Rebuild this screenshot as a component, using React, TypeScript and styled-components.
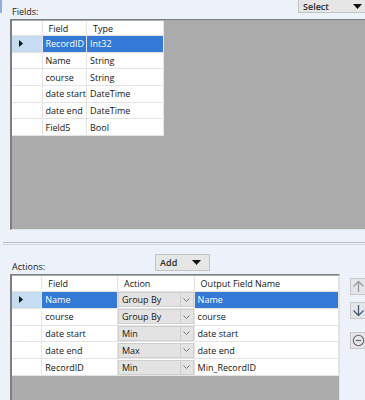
import styled, { createGlobalStyle } from "styled-components";

const GlobalStyle = createGlobalStyle`
  html, body {
    margin: 0;
    padding: 0;
    background: #edf1f9;
  }
  body {
    font-family: "Open Sans", "Noto Sans", sans-serif;
    font-size: 9px;
    color: #151515;
  }
`;

type FieldRow = { field: string; type: string };
type ActionRow = { field: string; action: string; output: string };

const fields: FieldRow[] = [
  { field: "RecordID", type: "Int32" },
  { field: "Name", type: "String" },
  { field: "course", type: "String" },
  { field: "date start", type: "DateTime" },
  { field: "date end", type: "DateTime" },
  { field: "Field5", type: "Bool" },
];

const actions: ActionRow[] = [
  { field: "Name", action: "Group By", output: "Name" },
  { field: "course", action: "Group By", output: "course" },
  { field: "date start", action: "Min", output: "date start" },
  { field: "date end", action: "Max", output: "date end" },
  { field: "RecordID", action: "Min", output: "Min_RecordID" },
];

const Caret = () => (
  <svg width="9" height="5" viewBox="0 0 9 5">
    <path d="M0 0 H9 L4.5 5 Z" fill="#111" />
  </svg>
);

const Chevron = () => (
  <svg width="7" height="4" viewBox="0 0 7 4">
    <path d="M0.5 0.5 L3.5 3.5 L6.5 0.5" fill="none" stroke="#7a7a7a" strokeWidth="1" />
  </svg>
);

const RowPointer = () => (
  <svg width="4" height="7" viewBox="0 0 4 7">
    <path d="M0 0 L4 3.5 L0 7 Z" fill="#111" />
  </svg>
);

const App = () => {
  return (
    <>
      <GlobalStyle />
      <Page>
        <EdgeMark />
        <SectionHead $height={19}>
          <Label>Fields:</Label>
          <DropButton $width={67} $top>
            <span>Select</span>
            <Caret />
          </DropButton>
        </SectionHead>

        <GridFrame $height={211}>
          <Table>
            <colgroup>
              <col style={{ width: 30 }} />
              <col style={{ width: 43 }} />
              <col style={{ width: 77 }} />
            </colgroup>
            <thead>
              <tr>
                <HeadCell />
                <HeadCell>Field</HeadCell>
                <HeadCell>Type</HeadCell>
              </tr>
            </thead>
            <tbody>
              {fields.map((f, i) => (
                <BodyRow key={f.field} $height={16.67}>
                  <RowHead $selected={i === 0}>{i === 0 && <RowPointer />}</RowHead>
                  <Cell $selected={i === 0}>{f.field}</Cell>
                  <Cell $selected={i === 0}>{f.type}</Cell>
                </BodyRow>
              ))}
            </tbody>
          </Table>
        </GridFrame>

        <Divider />

        <SectionHead $height={29}>
          <Label>Actions:</Label>
          <DropButton $width={55} $offset={110}>
            <span>Add</span>
            <Caret />
          </DropButton>
        </SectionHead>

        <ActionsBody>
          <GridFrame $width={330} $height={130}>
            <Table>
              <colgroup>
                <col style={{ width: 30 }} />
                <col style={{ width: 76 }} />
                <col style={{ width: 77 }} />
                <col style={{ width: 145 }} />
              </colgroup>
              <thead>
                <tr>
                  <HeadCell $height={15} />
                  <HeadCell>Field</HeadCell>
                  <HeadCell>Action</HeadCell>
                  <HeadCell>Output Field Name</HeadCell>
                </tr>
              </thead>
              <tbody>
                {actions.map((a, i) => (
                  <BodyRow key={a.field} $height={16.8}>
                    <RowHead $selected={i === 0}>{i === 0 && <RowPointer />}</RowHead>
                    <Cell $selected={i === 0}>{a.field}</Cell>
                    <ComboCell>
                      <ComboInner>
                        <span>{a.action}</span>
                        <ComboArrow>
                          <Chevron />
                        </ComboArrow>
                      </ComboInner>
                    </ComboCell>
                    <Cell $selected={i === 0}>{a.output}</Cell>
                  </BodyRow>
                ))}
              </tbody>
            </Table>
          </GridFrame>

          <SideButtons>
            <IconButton>
              <svg width="13" height="13" viewBox="0 0 13 13">
                <path d="M6.5 12 V1.5 M1.5 6.5 L6.5 1.5 L11.5 6.5" fill="none" stroke="#9a9a9a" strokeWidth="1.3" />
              </svg>
            </IconButton>
            <IconButton>
              <svg width="13" height="13" viewBox="0 0 13 13">
                <path d="M6.5 1 V11.5 M1.5 6.5 L6.5 11.5 L11.5 6.5" fill="none" stroke="#4a5a78" strokeWidth="1.3" />
              </svg>
            </IconButton>
            <IconButton $gapTop={6}>
              <svg width="13" height="13" viewBox="0 0 13 13">
                <circle cx="6.5" cy="6.5" r="5.2" fill="none" stroke="#666" strokeWidth="1.1" />
                <path d="M3.8 6.5 H9.2" stroke="#666" strokeWidth="1.2" />
              </svg>
            </IconButton>
          </SideButtons>
        </ActionsBody>
      </Page>
    </>
  );
};

export default App;

const Page = styled.div`
  position: relative;
  width: 365px;
  height: 400px;
  overflow: hidden;
  background: #edf1f9;
  display: flex;
  flex-direction: column;
`;

const EdgeMark = styled.div`
  position: absolute;
  left: 0;
  top: 0;
  width: 2px;
  height: 13px;
  background: #8eaee0;
`;

const SectionHead = styled.div<{ $height: number }>`
  height: ${(p) => p.$height}px;
  display: flex;
  align-items: flex-end;
  padding-left: 12px;
  flex-shrink: 0;
`;

const Label = styled.div`
  font-size: 9px;
  line-height: 10px;
  margin-bottom: 2px;
  color: #1a1a1a;
`;

const DropButton = styled.div<{ $width: number; $top?: boolean; $offset?: number }>`
  box-sizing: border-box;
  width: ${(p) => p.$width}px;
  height: ${(p) => (p.$top ? 14 : 17)}px;
  margin-left: ${(p) => (p.$offset ? `${p.$offset}px` : "auto")};
  align-self: ${(p) => (p.$top ? "flex-start" : "flex-end")};
  margin-top: ${(p) => (p.$top ? "-1px" : "0")};
  margin-bottom: ${(p) => (p.$top ? "0" : "3px")};
  background: #e6e6e6;
  border: 1px solid #c4c4c4;
  border-right: ${(p) => (p.$top ? "none" : "1px solid #c4c4c4")};
  display: flex;
  align-items: center;
  justify-content: space-between;
  padding: 0 ${(p) => (p.$top ? "3px" : "8px")} 0 4px;
  font-size: 9px;
  font-weight: 600;
  color: #2a2a2a;
`;

const GridFrame = styled.div<{ $width?: number; $height: number }>`
  box-sizing: border-box;
  margin-left: 10px;
  width: ${(p) => (p.$width ? `${p.$width}px` : "auto")};
  height: ${(p) => p.$height}px;
  flex-shrink: 0;
  background: #ababab;
  border-top: 1px solid #7e7e7e;
  border-left: 2px solid #7e7e7e;
  border-bottom: 1px solid #e2e2e2;
  border-right: ${(p) => (p.$width ? "1px solid #e2e2e2" : "none")};
  padding-top: 1px;
`;

const Table = styled.table`
  border-collapse: collapse;
  table-layout: fixed;
  font-size: 9px;
  color: #151515;
`;

const HeadCell = styled.th<{ $height?: number }>`
  height: ${(p) => p.$height ?? 14}px;
  padding: 0 0 0 6px;
  background: #ffffff;
  border: 1px solid #e4e4e4;
  border-top: none;
  text-align: left;
  font-weight: 400;
  white-space: nowrap;
  overflow: hidden;
  &:first-child {
    border-left: none;
  }
`;

const BodyRow = styled.tr<{ $height: number }>`
  height: ${(p) => p.$height}px;
`;

const RowHead = styled.td<{ $selected?: boolean }>`
  padding: 0 0 0 7px;
  background: ${(p) => (p.$selected ? "#c5dcf2" : "#ffffff")};
  border: 1px solid #e4e4e4;
  border-left: none;
  line-height: 0;
`;

const Cell = styled.td<{ $selected?: boolean }>`
  padding: 0 0 0 3px;
  background: ${(p) => (p.$selected ? "#3579d6" : "#ffffff")};
  color: ${(p) => (p.$selected ? "#ffffff" : "#151515")};
  border: 1px solid #e4e4e4;
  white-space: nowrap;
  overflow: hidden;
`;

const ComboCell = styled.td`
  padding: 0;
  background: #ffffff;
  border: 1px solid #e4e4e4;
`;

const ComboInner = styled.div`
  box-sizing: border-box;
  height: 100%;
  min-height: 15px;
  display: flex;
  align-items: center;
  justify-content: space-between;
  background: #e3e3e3;
  border: 1px solid #cfcfcf;
  padding-left: 3px;
`;

const ComboArrow = styled.div`
  width: 12px;
  align-self: stretch;
  display: flex;
  align-items: center;
  justify-content: center;
  border-left: 1px solid #cfcfcf;
`;

const Divider = styled.div`
  margin: 12px 0 0 3px;
  height: 1px;
  border-top: 1px solid #b8bcc4;
  border-bottom: 1px solid #d6d9e0;
  flex-shrink: 0;
`;

const ActionsBody = styled.div`
  display: flex;
  align-items: flex-start;
  flex: 1;
`;

const SideButtons = styled.div`
  display: flex;
  flex-direction: column;
  gap: 7px;
  margin-left: 10px;
  padding-top: 4px;
`;

const IconButton = styled.div<{ $gapTop?: number }>`
  box-sizing: border-box;
  width: 16px;
  height: 17px;
  margin-top: ${(p) => p.$gapTop ?? 0}px;
  background: #e4e6ea;
  border: 1px solid #c6c8cc;
  display: flex;
  align-items: center;
  justify-content: center;
`;
